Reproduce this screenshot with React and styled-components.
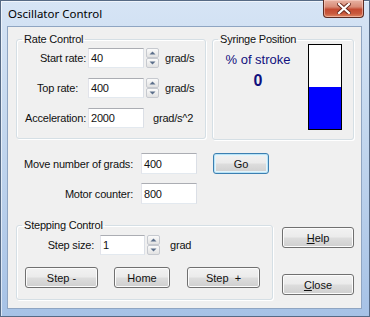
import React from 'react';
import styled, { createGlobalStyle, css } from 'styled-components';

const Global = createGlobalStyle`
  html, body { margin: 0; padding: 0; }
  body {
    width: 370px; height: 317px; overflow: hidden;
    background: #bcd1ec;
    font-family: "Liberation Sans", Arial, sans-serif;
  }
`;

const Window = styled.div`
  width: 370px; height: 317px; box-sizing: border-box;
  display: flex; flex-direction: column;
  border: 1px solid #566a85;
  padding: 0 7px 7px 6px;
  background: linear-gradient(180deg, #d6e4f5 0%, #c6d9ef 35%, #b6cdea 70%, #a6c2e6 100%);
  box-shadow: inset 1px 1px 0 rgba(255,255,255,0.6);
`;

const TitleBar = styled.div`
  height: 25px; flex: none;
  display: flex; justify-content: space-between; align-items: flex-start;
  padding-left: 1px;
`;

const Title = styled.div`
  font-family: "Noto Sans", "Open Sans", sans-serif;
  font-size: 11.5px; line-height: 15px;
  padding-top: 5px;
  color: #000;
`;

const CloseButton = styled.div`
  width: 41px; height: 18px; box-sizing: border-box;
  margin: -1px -2px 0 0;
  border: 1px solid #5c2b22; border-top: none;
  border-radius: 0 0 4px 4px;
  background: linear-gradient(180deg, #e8b2a3 0%, #d98c77 40%, #c44a31 55%, #c95a3e 80%, #df8763 100%);
  box-shadow: inset 0 0 0 1px rgba(255,220,210,0.5);
  display: flex; align-items: center; justify-content: center;
`;

const Client = styled.div`
  flex: 1;
  border: 1px solid #8fa5c2;
  background: #f0f0f0;
  padding: 6px 0 0 8px;
  display: flex; flex-direction: column;
  font-size: 11px; letter-spacing: -0.2px; color: #111;
`;

const TopRow = styled.div`
  display: flex; gap: 6px; align-items: flex-start;
`;

const Group = styled.fieldset`
  margin: 0; padding: 0;
  box-sizing: border-box;
  width: ${p => p.$w}px;
  border: 1px solid #d5dfe5;
  border-radius: 3px;
  box-shadow: inset 1px 1px 0 #fff, 1px 1px 0 #fff;
  min-width: 0;
`;

const Legend = styled.legend`
  margin-left: 5px; padding: 0 2px;
  line-height: 12px; font-size: 11px;
`;

const RateBody = styled.div`
  display: flex; flex-direction: column; gap: 10px;
  padding: 3px 0 10px 0;
`;

const FieldRow = styled.div`
  display: flex; align-items: center; height: ${p => p.$h || 20}px;
`;

const Label = styled.span`
  box-sizing: border-box;
  width: ${p => p.$w}px;
  padding-right: ${p => p.$pr || 0}px;
  text-align: right; white-space: nowrap; flex: none;
`;

const TextBox = styled.div`
  box-sizing: border-box; flex: none;
  width: ${p => p.$w}px; height: ${p => p.$h || 20}px;
  margin-left: ${p => p.$ml || 0}px;
  background: #fff;
  border: 1px solid;
  border-color: #abadb3 #dbdfe6 #e3e9ef #e2e3ea;
  padding: 0 2px;
  display: flex; align-items: center;
`;

const Spin = styled.div`
  display: flex; flex-direction: column; gap: 0;
  margin-left: 2px; width: 13px; height: 20px; flex: none;
`;

const SpinBtn = styled.div`
  flex: 1; box-sizing: border-box;
  border: 1px solid #c6c9cf;
  border-radius: 2px;
  background: linear-gradient(180deg, #fbfbfb 0%, #eeeeee 50%, #e2e2e2 100%);
  display: flex; align-items: center; justify-content: center;
`;

const Unit = styled.span`
  margin-left: ${p => p.$ml}px; white-space: nowrap;
`;

const SyringeBody = styled.div`
  display: flex; align-items: flex-start;
  padding: 0 11px 9px 0;
`;

const StrokeCol = styled.div`
  width: 90px; display: flex; flex-direction: column; align-items: center;
  color: #10107e;
`;

const StrokeLabel = styled.div`
  font-size: 13px; line-height: 15px; letter-spacing: 0;
  margin-top: 7px;
`;

const StrokeValue = styled.div`
  font-size: 16px; line-height: 18px; font-weight: bold; letter-spacing: 0;
  margin-top: 5px;
`;

const Bar = styled.div`
  margin: -1px 0 0 5px;
  width: 34px; height: 86px; box-sizing: border-box;
  border: 1px solid #000;
  background: #fff;
  display: flex; flex-direction: column; justify-content: flex-end;
`;

const BarFill = styled.div`
  background: #0000ff;
`;

const MidBlock = styled.div`
  display: flex; flex-direction: column; gap: 9px;
  margin-top: 13px;
`;

const Button = styled.div`
  box-sizing: border-box; flex: none;
  width: ${p => p.$w}px; height: 21px;
  margin-left: ${p => p.$ml || 0}px;
  border: 1px solid #707070;
  border-radius: 3px;
  background: linear-gradient(180deg, #f2f2f2 0%, #ebebeb 48%, #dddddd 52%, #cfcfcf 100%);
  box-shadow: inset 0 0 0 1px #fcfcfc;
  display: flex; align-items: center; justify-content: center;
  letter-spacing: 0;
  ${p => p.$default && css`
    border-color: #3c7fb1;
    box-shadow: inset 0 0 0 1px #b9e3f6, inset 0 0 0 2px #e4f4fb;
  `}
`;

const BottomRow = styled.div`
  display: flex; align-items: flex-start; gap: 9px;
  margin-top: 15px;
`;

const StepBody = styled.div`
  display: flex; flex-direction: column; gap: 12px;
  padding: 4px 0 11px 0;
`;

const ButtonRow = styled.div`
  display: flex; padding-left: 8px;
`;

const SideButtons = styled.div`
  display: flex; flex-direction: column; gap: 26px;
  padding-top: 8px;
`;

const Arrow = ({ up }) => (
  <svg width="7" height="4" viewBox="0 0 7 4">
    <path d={up ? 'M0.5 3.5 L3.5 0.5 L6.5 3.5 Z' : 'M0.5 0.5 L3.5 3.5 L6.5 0.5 Z'} fill="#5b6e8a" />
  </svg>
);

const Spinner = () => (
  <Spin>
    <SpinBtn><Arrow up /></SpinBtn>
    <SpinBtn><Arrow /></SpinBtn>
  </Spin>
);

const CloseX = () => (
  <svg width="14" height="11" viewBox="0 0 14 11">
    <path d="M2 1 L12 10 M12 1 L2 10" stroke="#6b2a1e" strokeWidth="4" strokeLinecap="square" />
    <path d="M2 1 L12 10 M12 1 L2 10" stroke="#fff" strokeWidth="2.2" strokeLinecap="square" />
  </svg>
);

export default function App() {
  const fill = 0.5;
  return (
    <>
      <Global />
      <Window>
        <TitleBar>
          <Title>Oscillator Control</Title>
          <CloseButton><CloseX /></CloseButton>
        </TitleBar>
        <Client>
          <TopRow>
            <Group $w={190}>
              <Legend>Rate Control</Legend>
              <RateBody>
                <FieldRow>
                  <Label $w={71} $pr={2}>Start rate:</Label>
                  <TextBox $w={56}>40</TextBox>
                  <Spinner />
                  <Unit $ml={6}>grad/s</Unit>
                </FieldRow>
                <FieldRow>
                  <Label $w={71} $pr={10}>Top rate:</Label>
                  <TextBox $w={56}>400</TextBox>
                  <Spinner />
                  <Unit $ml={6}>grad/s</Unit>
                </FieldRow>
                <FieldRow>
                  <Label $w={71} $pr={2}>Acceleration:</Label>
                  <TextBox $w={56}>2000</TextBox>
                  <Unit $ml={9}>grad/s^2</Unit>
                </FieldRow>
              </RateBody>
            </Group>
            <Group $w={142}>
              <Legend>Syringe Position</Legend>
              <SyringeBody>
                <StrokeCol>
                  <StrokeLabel>% of stroke</StrokeLabel>
                  <StrokeValue>0</StrokeValue>
                </StrokeCol>
                <Bar>
                  <BarFill style={{ height: `${fill * 100}%` }} />
                </Bar>
              </SyringeBody>
            </Group>
          </TopRow>
          <MidBlock>
            <FieldRow $h={21}>
              <Label $w={117}>Move number of grads:</Label>
              <TextBox $w={56} $h={21} $ml={8}>400</TextBox>
              <Button $w={56} $ml={16} $default>Go</Button>
            </FieldRow>
            <FieldRow $h={21}>
              <Label $w={117}>Motor counter:</Label>
              <TextBox $w={56} $h={21} $ml={8}>800</TextBox>
            </FieldRow>
          </MidBlock>
          <BottomRow>
            <Group $w={257}>
              <Legend>Stepping Control</Legend>
              <StepBody>
                <FieldRow>
                  <Label $w={77}>Step size:</Label>
                  <TextBox $w={45} $ml={6}>1</TextBox>
                  <Spinner />
                  <Unit $ml={10}>grad</Unit>
                </FieldRow>
                <ButtonRow>
                  <Button $w={73}>Step -</Button>
                  <Button $w={56} $ml={16}>Home</Button>
                  <Button $w={73} $ml={17}>Step&nbsp; +</Button>
                </ButtonRow>
              </StepBody>
            </Group>
            <SideButtons>
              <Button $w={72}><span><u>H</u>elp</span></Button>
              <Button $w={72}><span><u>C</u>lose</span></Button>
            </SideButtons>
          </BottomRow>
        </Client>
      </Window>
    </>
  );
}
